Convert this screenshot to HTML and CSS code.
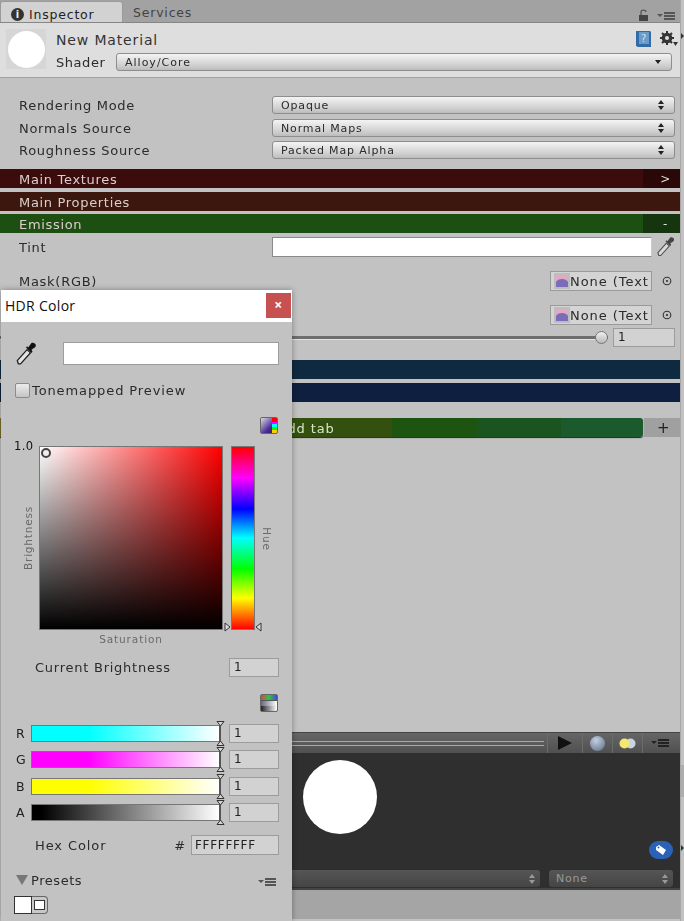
FILE: index.html
```html
<!DOCTYPE html>
<html lang="en">
<head>
<meta charset="utf-8">
<title>Inspector</title>
<link rel="stylesheet" href="styles.css">
</head>
<body>
<svg class="defs" width="0" height="0" aria-hidden="true">
  <symbol id="menu" viewBox="0 0 18 10">
    <path d="M0 3h6L3 6z" fill="currentColor"/>
    <path d="M7 1h11v2H7zM7 4h11v2H7zM7 7h11v2H7z" fill="currentColor"/>
  </symbol>
  <symbol id="dropper" viewBox="0 0 20 22">
    <path d="M3 20 2 17 11 7l3 3-9 10z" fill="#e4e4e4" stroke="#222" stroke-width="1.2"/>
    <path d="M10 5l1-1 1 1 3-4c1-1 4 0 4 2s-1 2-4 4l1 2-1 1z" fill="#111"/>
  </symbol>
  <symbol id="thumb" viewBox="0 0 16 16">
    <rect width="16" height="16" fill="#bdbdbd"/>
    <path d="M2 2h12v12H2z" fill="#e2a8c4"/>
    <path d="M2 9C4 5 12 5 14 9v5H2z" fill="#7a6cb8"/>
  </symbol>
  <symbol id="target" viewBox="0 0 10 10">
    <circle cx="5" cy="5" r="3.8" fill="none" stroke="#333" stroke-width="1.1"/>
    <circle cx="5" cy="5" r="1.1" fill="#333"/>
  </symbol>
  <symbol id="updown" viewBox="0 0 6 10">
    <path d="M3 0l3 4H0zM3 10 0 6h6z"/>
  </symbol>
  <symbol id="tk-down" viewBox="0 0 9 6">
    <path d="M1 .5h7L4.500 5z" fill="#d4d4d4" stroke="#333"/>
  </symbol>
  <symbol id="tk-up" viewBox="0 0 9 6">
    <path d="M1 5.500h7L4.500 1z" fill="#d4d4d4" stroke="#333"/>
  </symbol>
</svg>

<main class="inspector">
  <div class="tabs">
    <div class="tab tab-active"><span class="info">i</span>Inspector</div>
    <div class="tab tab-other">Services</div>
    <div class="tab-tools">
      <svg class="lock" width="11" height="12" viewBox="0 0 11 12"><path d="M1 6h9v6H1z" fill="#444"/><path d="M3 6V3C3 .5 8 .5 8 3" fill="none" stroke="#555" stroke-width="1.300"/></svg>
      <svg class="menu-icon" width="18" height="10"><use href="#menu"/></svg>
    </div>
  </div>

  <header class="mat-head">
    <div class="mat-thumb"><div class="mat-ball"></div></div>
    <div class="mat-info">
      <div class="mat-title">
        <span>New Material</span>
        <span class="mat-icons">
          <svg width="17" height="18" viewBox="0 0 17 18"><path d="M1 1h14l1 1v15H3l-2-1z" fill="#2f6ca8"/><path d="M4 2h10v12H4z" fill="#6d9bc8"/><text x="6" y="12" font-size="10" fill="#cfe0f2" font-family="DejaVu Sans">?</text></svg>
          <svg width="18" height="16" viewBox="0 0 18 16"><circle cx="7" cy="7" r="4" fill="none" stroke="#333" stroke-width="2.600"/><path d="M7 0v14M0 7h14M2 2l10 10M12 2 2 12" stroke="#333" stroke-width="2"/><circle cx="7" cy="7" r="2" fill="#dedede"/><path d="M13 11h5l-2.500 4z" fill="#333"/></svg>
        </span>
      </div>
      <div class="mat-shader">
        <span class="shader-label">Shader</span>
        <div class="popup popup-shader"><span>Alloy/Core</span><i class="caret"></i></div>
      </div>
    </div>
  </header>

  <section class="props">
    <div class="row row-mode"><label>Rendering Mode</label><div class="popup"><span>Opaque</span><svg class="ud" width="6" height="10"><use href="#updown"/></svg></div></div>
    <div class="row row-mode2"><label>Normals Source</label><div class="popup"><span>Normal Maps</span><svg class="ud" width="6" height="10"><use href="#updown"/></svg></div></div>
    <div class="row row-mode3"><label>Roughness Source</label><div class="popup"><span>Packed Map Alpha</span><svg class="ud" width="6" height="10"><use href="#updown"/></svg></div></div>

    <div class="bar bar-textures"><div class="bar-main">Main Textures</div><div class="bar-btn btn-dark-red">&gt;</div></div>
    <div class="bar bar-properties"><div class="bar-main">Main Properties</div></div>
    <div class="bar bar-emission"><div class="bar-main">Emission</div><div class="bar-btn btn-dark-green">-</div></div>

    <div class="row row-tint"><label>Tint</label><div class="tint-swatch"></div><svg class="tint-dropper" width="20" height="22"><use href="#dropper"/></svg></div>

    <div class="row row-tex row-tex1">
      <label>Mask(RGB)</label>
      <div class="tex-field"><svg width="16" height="16"><use href="#thumb"/></svg><span>None (Text</span></div>
      <svg class="tex-target" width="10" height="10"><use href="#target"/></svg>
    </div>
    <div class="row row-tex row-tex2">
      <label></label>
      <div class="tex-field"><svg width="16" height="16"><use href="#thumb"/></svg><span>None (Text</span></div>
      <svg class="tex-target" width="10" height="10"><use href="#target"/></svg>
    </div>
    <div class="row row-slider">
      <div class="slider"><i class="knob"></i></div>
      <div class="num num-slider">1</div>
    </div>

    <div class="bar bar-blue1"><div class="bar-main"></div></div>
    <div class="bar bar-blue2"><div class="bar-main"></div></div>
    <div class="bar bar-add"><div class="bar-main add-main">Add tab</div><div class="bar-btn btn-plus">+</div></div>
  </section>

  <section class="preview">
    <div class="pv-toolbar">
      <div class="pv-track"></div>
      <div class="pv-cell pv-play"><svg width="16" height="16" viewBox="0 0 16 16"><path d="M1 1l14 7L1 15z" fill="#111"/></svg></div>
      <div class="pv-cell"><i class="pv-sphere"></i></div>
      <div class="pv-cell"><svg width="17" height="11" viewBox="0 0 17 11"><circle cx="11.500" cy="5.500" r="5" fill="#c8d4e0"/><circle cx="5.500" cy="5.500" r="5" fill="#f4e86e"/></svg></div>
      <div class="pv-cell pv-last"><svg width="18" height="10"><use href="#menu"/></svg></div>
    </div>
    <div class="pv-stage">
      <div class="pv-ball"></div>
      <div class="pv-tag"><svg width="12" height="12" viewBox="0 0 12 12"><path d="M1 3l3-2 7 5-3 5-7-5z" fill="#fff"/><circle cx="3.500" cy="3.500" r="1" fill="#2a62b8"/></svg></div>
      <div class="pv-selects">
        <div class="pv-select pv-select-wide"><svg width="6" height="10"><use href="#updown"/></svg></div>
        <div class="pv-select"><span>None</span><svg width="6" height="10"><use href="#updown"/></svg></div>
      </div>
    </div>
    <div class="pv-foot"></div>
  </section>
</main>

<i class="edge-mark edge-a"></i>
<i class="edge-mark edge-b"></i>
<i class="edge-band"></i>

<aside class="hdr">
  <div class="hdr-title"><span>HDR Color</span><div class="hdr-close">×</div></div>
  <div class="hdr-body">
    <div class="h-swatch-row">
      <svg width="22" height="24"><use href="#dropper"/></svg>
      <div class="h-swatch"></div>
    </div>
    <div class="h-check-row"><i class="check"></i><span>Tonemapped Preview</span></div>
    <div class="h-icon-row h-icon-a"><i class="mode-icon mode-sv"></i></div>

    <div class="picker">
      <div class="pk-left"><span class="pk-one">1.0</span><span class="pk-bright">Brightness</span></div>
      <div class="pk-square"><i class="pk-dot"></i></div>
      <div class="pk-hue">
        <svg class="mk mk-l" width="7" height="10" viewBox="0 0 7 10"><path d="M1 1l5 4-5 4z" fill="#ddd" stroke="#333"/></svg>
        <svg class="mk mk-r" width="7" height="10" viewBox="0 0 7 10"><path d="M6 1 1 5l5 4z" fill="#ddd" stroke="#333"/></svg>
      </div>
      <span class="pk-huelabel">Hue</span>
    </div>
    <div class="pk-sat">Saturation</div>

    <div class="h-bright"><span>Current Brightness</span><div class="num num-h">1</div></div>
    <div class="h-icon-row h-icon-b"><i class="mode-icon mode-rgb"></i></div>

    <div class="chan chan-r"><b>R</b><div class="chan-bar"><svg class="tk tk-top" width="9" height="6"><use href="#tk-down"/></svg><svg class="tk tk-bot" width="9" height="6"><use href="#tk-up"/></svg></div><div class="num num-h">1</div></div>
    <div class="chan chan-g"><b>G</b><div class="chan-bar"><svg class="tk tk-top" width="9" height="6"><use href="#tk-down"/></svg><svg class="tk tk-bot" width="9" height="6"><use href="#tk-up"/></svg></div><div class="num num-h">1</div></div>
    <div class="chan chan-b"><b>B</b><div class="chan-bar"><svg class="tk tk-top" width="9" height="6"><use href="#tk-down"/></svg><svg class="tk tk-bot" width="9" height="6"><use href="#tk-up"/></svg></div><div class="num num-h">1</div></div>
    <div class="chan chan-a"><b>A</b><div class="chan-bar"><svg class="tk tk-top" width="9" height="6"><use href="#tk-down"/></svg><svg class="tk tk-bot" width="9" height="6"><use href="#tk-up"/></svg></div><div class="num num-h">1</div></div>

    <div class="h-hex"><span class="hex-label">Hex Color</span><span class="hex-hash">#</span><div class="num num-hex">FFFFFFFF</div></div>

    <div class="h-presets">
      <i class="tri"></i><span>Presets</span>
      <svg class="menu-icon" width="18" height="10"><use href="#menu"/></svg>
    </div>
    <div class="h-preset-items"><i class="preset-a"></i><i class="preset-b"></i></div>
  </div>
</aside>
</body>
</html>
```
FILE: styles.css
```css
* { box-sizing: border-box; }
html, body { margin: 0; padding: 0; height: 921px; overflow: hidden; }
body {
  position: relative;
  background: #c2c2c2;
  font-family: "DejaVu Sans", sans-serif;
  font-size: 12px;
  letter-spacing: .55px;
  color: #2b2b2b;
}
.defs { position: absolute; }
.menu-icon { color: #555; }

.inspector { width: 681px; height: 921px; display: flex; flex-direction: column; border-right: 1px solid #a8a8a8; filter: blur(.35px); }

/* tabs */
.tabs { height: 23px; background: #a2a2a2; display: flex; align-items: flex-end; border-bottom: 1px solid #858585; flex: none; position: relative; }
.tab { height: 21px; line-height: 20px; color: #444; font-size: 12.500px; letter-spacing: .8px; }
.tab-other { padding: 2px 0 0 10px; }
.tab-active { width: 123px; padding: 5px 0 0 10px; background: #d2d2d2; border: 1px solid #9a9a9a; border-bottom: 0; border-radius: 3px 3px 0 0; color: #222; display: flex; align-items: center; gap: 5px; }
.info { width: 13px; height: 13px; border-radius: 50%; background: #333; color: #eee; font-size: 10px; font-weight: bold; line-height: 13px; text-align: center; letter-spacing: 0; }
.tab-tools { margin-left: auto; display: flex; align-items: flex-end; gap: 8px; padding: 0 5px 1px 0; }

/* material header */
.mat-head { height: 55px; background: #dedede; border-bottom: 1px solid #a0a0a0; display: flex; flex: none; padding: 6px 5px 0 6px; }
.mat-thumb { width: 40px; height: 40px; background: #d6d6d6; display: flex; align-items: center; justify-content: center; }
.mat-ball { width: 37px; height: 37px; background: #fff; border-radius: 50%; }
.mat-info { flex: 1; margin-left: 10px; }
.mat-title { display: flex; height: 22px; align-items: center; justify-content: space-between; font-size: 14px; letter-spacing: .85px; color: #333; }
.mat-icons { display: flex; gap: 8px; align-items: center; margin: -2px -3px 0 0; }
.mat-shader { display: flex; align-items: center; margin-top: 2px; }
.shader-label { width: 60px; font-size: 13px; }

.popup { flex: 1; height: 18px; padding: 0 10px 0 8px; display: flex; align-items: center; justify-content: space-between; font-size: 11px; letter-spacing: .85px; color: #2a2a2a; background: linear-gradient(#f4f4f4, #d0d0d0 70%, #bcbcbc); border: 1px solid #8d8d8d; border-radius: 3px; }
.popup-shader { margin-right: 3px; letter-spacing: 1px; }
.caret { width: 0; height: 0; border: 3px solid transparent; border-top: 4px solid #222; border-bottom: 0; }
.ud { fill: #222; }

/* properties */
.props { flex: 1; display: flex; flex-direction: column; padding-top: 18px; min-height: 0; }
.row { display: flex; align-items: center; padding: 0 5px 0 19px; flex: none; }
.row label { width: 253px; font-size: 13px; letter-spacing: .72px; }
.row-mode { height: 18px; }
.row-mode2 { height: 18px; margin-top: 5px; }
.row-mode3 { height: 18px; margin-top: 4px; }

.bar { display: flex; height: 19px; flex: none; color: #dccfcb; font-size: 13px; letter-spacing: .68px; line-height: 21px; }
.bar-main { flex: 1; padding-left: 19px; background: inherit; }
.bar-btn { width: 37px; padding-left: 8px; text-align: center; font-size: 12px; color: #ddd; }
.bar-textures { margin-top: 10px; }
.bar-textures .bar-main { background: #3c0c0c; }
.btn-dark-red { background: #2a0808; }
.bar-properties { margin-top: 4px; background: #3c170e; }
.bar-emission { margin-top: 3px; }
.bar-emission .bar-main { background: #1d4f13; }
.btn-dark-green { background: #15350e; }

.row-tint { height: 20px; margin-top: 4px; }
.tint-swatch { width: 380px; height: 20px; background: #fff; border: 1px solid #8a8a8a; border-right-color: #ccc; }
.tint-dropper { margin-left: 4px; width: 19px; opacity: .7; }

.row-tex { height: 20px; }
.row-tex1, .row-tex2 { margin-top: 14px; }
.tex-field { width: 102px; height: 20px; margin-left: 278px; background: #d4d4d4; border: 1px solid #9a9a9a; display: flex; align-items: center; padding-left: 3px; font-size: 13px; overflow: hidden; white-space: nowrap; letter-spacing: .95px; }
.tex-target { margin-left: 10px; }
.row-slider { height: 19px; margin-top: 3px; padding-left: 0; }
.slider { flex: 1; background: #6e6e6e; border-bottom: 1px solid #e2e2e2; height: 4px; position: relative; margin-right: 5px; }
.knob { position: absolute; right: 0; top: -5px; width: 13px; height: 13px; border-radius: 50%; background: linear-gradient(#f0f0f0, #b8b8b8); border: 1px solid #777; }
.num { background: #d2d2d2; border: 1px solid #9c9c9c; font-size: 12px; line-height: 17px; padding-left: 4px; color: #222; }
.num-slider { width: 62px; height: 19px; }

.bar-blue1 { margin-top: 13px; background: #0f2a40; }
.bar-blue2 { margin-top: 4px; background: #0f1f3f; }
.bar-add { margin-top: 16px; color: #d8e4c8; }
.add-main { background: linear-gradient(to right, #7a7030 0 2px, #34500f 2px 392px, #1d5510 392px 477px, #1a5520 477px 561px, #1a5a2d 561px); padding-left: 278px; letter-spacing: .85px; box-shadow: 0 1px 1px #222; border-radius: 0 3px 3px 0; }
.btn-plus { width: 36px; margin-left: 1px; padding-left: 3px; background: #a0a0a0; color: #222; font-size: 15px; }

/* preview */
.preview { flex: none; height: 187px; margin: 0 0 2px 1px; display: flex; flex-direction: column; }
.pv-toolbar { height: 21px; background: linear-gradient(#666, #505050); border-top: 1px solid #444; display: flex; align-items: center; }
.pv-track { flex: 1; height: 5px; border-top: 1px solid #a8a8a8; border-bottom: 1px solid #a8a8a8; margin-right: 3px; }
.pv-cell { width: 30px; height: 20px; border-left: 1px solid #6c6c6c; display: flex; align-items: center; justify-content: center; }
.pv-play { width: 35px; }
.pv-last { width: 38px; color: #222; padding-right: 3px; }
.pv-sphere { width: 15px; height: 15px; border-radius: 50%; background: radial-gradient(circle at 40% 30%, #c4d0e0, #5a6a82); }
.pv-stage { flex: 1; background: #2f2f2f; position: relative; border-bottom: 2px solid #444; }
.pv-ball { position: absolute; left: 302px; top: 7px; width: 74px; height: 74px; border-radius: 50%; background: #fff; }
.pv-tag { position: absolute; left: 648px; top: 88px; width: 24px; height: 18px; border-radius: 9px; background: #2a62b8; display: flex; align-items: center; justify-content: center; }
.pv-selects { position: absolute; left: 0; right: 7px; bottom: 1px; display: flex; gap: 9px; }
.pv-select { width: 124px; height: 17px; background: linear-gradient(#555, #454545); border-radius: 3px; display: flex; justify-content: space-between; align-items: center; padding: 0 5px 0 7px; color: #999; fill: #999; font-size: 11px; letter-spacing: .8px; }
.pv-select-wide { flex: 1; justify-content: flex-end; }
.pv-foot { height: 29px; background: #a5a5a5; flex: none; }

.edge-mark { position: absolute; left: 681px; width: 0; height: 0; border: 3px solid transparent; border-left: 3px solid #333; }
.edge-a { top: 33px; }
.edge-b { top: 845px; }
.edge-band { position: absolute; left: 681px; top: 765px; width: 3px; height: 32px; background: #adadad; }

/* HDR colour window */
.hdr { position: absolute; left: 1px; top: 290px; width: 291px; height: 631px; background: #c2c2c2; box-shadow: 0 0 6px rgba(0,0,0,.35); display: flex; flex-direction: column; }
.hdr-title { height: 32px; background: #fff; display: flex; justify-content: space-between; font-family: "Open Sans", sans-serif; font-size: 14px; letter-spacing: .3px; color: #111; padding: 6px 1px 0 4px; flex: none; }
.hdr-close { width: 25px; height: 25px; margin-top: -3px; background: #c75050; color: #fff; text-align: center; font-size: 14px; line-height: 24px; font-weight: bold; }
.hdr-body { flex: 1; display: flex; flex-direction: column; padding: 0 13px; filter: blur(.35px); }

.h-swatch-row { display: flex; align-items: center; margin-top: 20px; height: 23px; flex: none; margin-left: 1px; }
.h-swatch { width: 216px; height: 23px; margin-left: 26px; background: #fff; border: 1px solid #9c9c9c; }
.h-check-row { display: flex; align-items: center; gap: 2px; margin-top: 18px; height: 15px; margin-left: 1px; font-size: 13px; letter-spacing: .9px; flex: none; }
.check { width: 15px; height: 15px; border-radius: 2px; background: linear-gradient(#ececec, #c4c4c4); border: 1px solid #8c8c8c; }

.h-icon-row { display: flex; justify-content: flex-end; flex: none; padding-right: 1px; }
.h-icon-a { margin-top: 19px; height: 16px; }
.mode-icon { width: 18px; height: 17px; display: block; border: 1px solid #666; border-radius: 2px; }
.mode-sv { background: linear-gradient(to bottom, #f00 0 25%, #f0f 25% 40%, #0ff 40% 60%, #0f0 60% 80%, #fc0 80%) right / 5px 100% no-repeat, linear-gradient(135deg, #ddd, #4a2a9a 60%, #222); }
.mode-rgb { height: 18px; background: linear-gradient(to right, #d44, #2c4, #44d) top / 100% 5px no-repeat, linear-gradient(to right, #668, #fff) center / 100% 5px no-repeat, linear-gradient(to right, #222, #fff) bottom / 100% 5px no-repeat, #555; }

.picker { position: relative; display: flex; height: 184px; margin-top: 13px; flex: none; }
.pk-left { width: 25px; position: relative; flex: none; }
.pk-one { position: absolute; left: 0; top: -7px; font-size: 11.500px; letter-spacing: .4px; color: #111; }
.pk-bright { position: absolute; left: 14px; top: 92px; transform: translate(-50%, -50%) rotate(-90deg); font-size: 10.500px; color: #6a6a6a; white-space: nowrap; letter-spacing: .8px; }
.pk-square { width: 184px; height: 184px; position: relative; border: 1px solid #777; background: linear-gradient(to top, #000, transparent), linear-gradient(to right, #fff, #f00); }
.pk-dot { position: absolute; left: 1px; top: 1px; width: 10px; height: 10px; border-radius: 50%; border: 2px solid #444; background: #eee; }
.pk-hue { width: 24px; height: 184px; margin-left: 8px; position: relative; border: 1px solid #777; background: linear-gradient(to bottom, #f00, #f0f 17%, #00f 34%, #0ff 50%, #0f0 67%, #ff0 83%, #f00); }
.mk { position: absolute; bottom: -3px; }
.mk-l { left: -8px; }
.mk-r { right: -8px; }
.pk-huelabel { position: absolute; left: 253px; top: 93px; transform: translate(-50%, -50%) rotate(90deg); font-size: 10.500px; color: #6a6a6a; letter-spacing: .8px; }
.pk-sat { margin-left: 25px; width: 184px; text-align: center; font-size: 10.500px; color: #6a6a6a; letter-spacing: .9px; margin-top: 3px; height: 14px; flex: none; }

.h-bright { display: flex; justify-content: space-between; align-items: center; margin-top: 11px; height: 19px; padding-left: 21px; font-size: 13px; letter-spacing: .75px; flex: none; }
.num-h { width: 50px; height: 19px; flex: none; font-size: 12px; padding-left: 4px; }
.h-icon-b { margin-top: 17px; height: 18px; }

.chan { display: flex; align-items: center; height: 19px; flex: none; position: relative; }
.chan b { width: 17px; font-weight: normal; font-size: 12.500px; padding-left: 2px; color: #222; }
.chan-r { margin-top: 12px; }
.chan-g, .chan-a { margin-top: 7px; }
.chan-b { margin-top: 8px; }
.chan-bar { width: 190px; height: 17px; margin-right: 8px; border: 1px solid #777; border-right: 2px solid #555; position: relative; }
.chan-r .chan-bar { background: linear-gradient(to right, #0ff 30%, #fff); }
.chan-g .chan-bar { background: linear-gradient(to right, #f0f 30%, #fff); }
.chan-b .chan-bar { background: linear-gradient(to right, #ff0 30%, #fff); }
.chan-a .chan-bar { background: linear-gradient(to right, #000 5%, #fff); }
.tk { position: absolute; right: -6px; }
.tk-top { top: -5px; }
.tk-bot { bottom: -5px; }

.h-hex { display: flex; align-items: center; margin-top: 13px; height: 20px; padding-left: 21px; font-size: 13px; letter-spacing: .9px; flex: none; }
.hex-label { flex: 1; }
.hex-hash { margin-right: 5px; }
.num-hex { width: 88px; height: 20px; font-size: 12px; padding-left: 3px; letter-spacing: .7px; line-height: 18px; }

.h-presets { display: flex; align-items: center; margin-top: 16px; height: 18px; padding-left: 2px; font-size: 13px; flex: none; }
.tri { width: 0; height: 0; border: 6px solid transparent; border-top: 10px solid #777; border-bottom: 0; }
.h-presets span { margin-left: 3px; flex: 1; }
.h-presets svg { margin: 3px 3px 0 0; }
.h-preset-items { display: flex; margin-top: 7px; flex: none; }
.preset-a { width: 18px; height: 18px; background: #fff; border: 1px solid #333; }
.preset-b { width: 16px; height: 18px; padding: 3px 2px; background: #c8c8c8; border: 1px solid #666; border-left: 0; border-radius: 0 4px 4px 0; display: flex; }
.preset-b::before { content: ""; flex: 1; background: #fff; border: 1px solid #333; }
```
